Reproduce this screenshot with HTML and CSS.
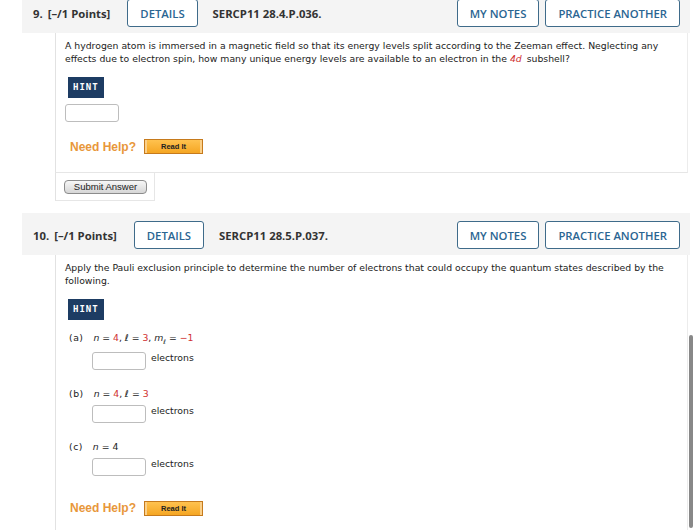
FILE: index.html
```html
<!DOCTYPE html>
<html lang="en">
<head>
    <meta charset="UTF-8">
    <meta name="viewport" content="width=device-width, initial-scale=1.0">
    <title>Assignment</title>
    <link rel="stylesheet" href="styles.css">
</head>
<body>
    <!-- Question 9 -->
    <div class="question first">
        <div class="q-header">
            <span class="q-num">9.</span>
            <span class="q-points">[–/1 Points]</span>
            <button class="btn">DETAILS</button>
            <span class="q-code">SERCP11 28.4.P.036.</span>
            <div class="q-actions">
                <button class="btn">MY NOTES</button>
                <button class="btn">PRACTICE ANOTHER</button>
            </div>
        </div>
        <div class="q-body">
            <p class="q-text">A hydrogen atom is immersed in a magnetic field so that its energy levels split according to the Zeeman effect. Neglecting any effects due to electron spin, how many unique energy levels are available to an electron in the <i class="red sub-name">4d</i> subshell?</p>
            <div class="hint">HINT</div>
            <input type="text" class="answer single">
            <div class="help">
                <span class="help-label">Need Help?</span>
                <button class="read-it">Read It</button>
            </div>
        </div>
        <div class="submit-row">
            <button class="submit">Submit Answer</button>
        </div>
    </div>

    <!-- Question 10 -->
    <div class="question">
        <div class="q-header">
            <span class="q-num">10.</span>
            <span class="q-points">[–/1 Points]</span>
            <button class="btn">DETAILS</button>
            <span class="q-code">SERCP11 28.5.P.037.</span>
            <div class="q-actions">
                <button class="btn">MY NOTES</button>
                <button class="btn">PRACTICE ANOTHER</button>
            </div>
        </div>
        <div class="q-body">
            <p class="q-text">Apply the Pauli exclusion principle to determine the number of electrons that could occupy the quantum states described by the following.</p>
            <div class="hint">HINT</div>

            <div class="part">
                <div class="part-label"><span class="letter">(a)</span> <i>n</i> = <span class="red">4</span>, <i>ℓ</i> = <span class="red">3</span>, <i>m</i><sub><i>ℓ</i></sub> = <span class="red">−1</span></div>
                <div class="part-input"><input type="text" class="answer"> electrons</div>
            </div>
            <div class="part">
                <div class="part-label"><span class="letter">(b)</span> <i>n</i> = <span class="red">4</span>, <i>ℓ</i> = <span class="red">3</span></div>
                <div class="part-input"><input type="text" class="answer"> electrons</div>
            </div>
            <div class="part">
                <div class="part-label"><span class="letter">(c)</span> <i>n</i> = 4</div>
                <div class="part-input"><input type="text" class="answer"> electrons</div>
            </div>

            <div class="help">
                <span class="help-label">Need Help?</span>
                <button class="read-it">Read It</button>
            </div>
        </div>
    </div>

    <div class="scrollbar"></div>
</body>
</html>
```

FILE: styles.css
```css
/* page */
body {
    margin: 0;
    background-color: #ffffff;
    font-family: "DejaVu Sans", Verdana, sans-serif;
    color: #222222;
    overflow: hidden;
}

/* one question block */
.question {
    margin: 12px 10px 0 22px;
}

.question.first {
    margin-top: -9px;
}

/* grey header with buttons */
.q-header {
    display: flex;
    align-items: center;
    background-color: #f4f4f4;
    padding: 8px 10px 6px 11px;
    font-family: "Open Sans", sans-serif;
    font-weight: 700;
    font-size: 11.3px;
    color: #333333;
}

.q-num {
    margin-right: 5px;
}

.q-points {
    margin-right: 17px;
}

.q-code {
    margin-left: 15px;
}

.q-actions {
    margin-left: auto;
    display: flex;
    gap: 6px;
}

.btn {
    height: 28px;
    padding: 0 12px;
    background-color: #ffffff;
    border: 1px solid #3f6b8a;
    border-radius: 3px;
    font-family: "Open Sans", sans-serif;
    font-weight: 600;
    font-size: 11.3px;
    color: #2a6592;
}

/* question body */
.q-body {
    margin-left: 33px;
    margin-right: 2px;
    border-left: 1px solid #e2e2e2;
    border-right: 1px solid #ececec;
    border-bottom: 1px solid #e6e6e6;
    padding: 6px 10px 18px 9px;
}

.q-text {
    margin: 0 0 12px 0;
    font-size: 9.3px;
    line-height: 13px;
}

.red {
    color: #d03030;
}

.sub-name {
    margin-right: 2px;
}

.hint {
    width: fit-content;
    height: 21px;
    line-height: 21px;
    box-sizing: border-box;
    margin-left: 3px;
    padding: 0 5px;
    background-color: #1d3c63;
    color: #ffffff;
    font-family: "DejaVu Sans Mono", monospace;
    font-weight: 700;
    font-size: 9px;
    letter-spacing: 1px;
}

.answer {
    width: 54px;
    height: 18px;
    box-sizing: border-box;
    border: 1px solid #bdbdbd;
    border-radius: 3px;
    margin: 0;
    vertical-align: middle;
}

.answer.single {
    display: block;
    margin-top: 6px;
}

/* Need Help? row */
.help {
    display: flex;
    align-items: center;
    margin-top: 17px;
    padding-left: 5px;
}

.part + .help {
    margin-top: 25px;
}

.help-label {
    font-family: "Liberation Sans", Arial, sans-serif;
    font-weight: 700;
    font-size: 12px;
    color: #e8973b;
    margin-right: 8px;
}

.read-it {
    width: 59px;
    height: 15px;
    padding: 0;
    border: 1px solid #c67a1c;
    box-shadow: inset 2px 0 0 #fbd089, inset -2px 0 0 #fbd089;
    background: linear-gradient(#ffc24f, #f5a623);
    font-family: "Liberation Sans", Arial, sans-serif;
    font-weight: 700;
    font-size: 7.5px;
    color: #222222;
}

/* submit cell under first question */
.submit-row {
    margin-left: 33px;
    width: 100px;
    height: 28px;
    border-left: 1px solid #e2e2e2;
    border-right: 1px solid #e6e6e6;
    border-bottom: 1px solid #e6e6e6;
    display: flex;
    align-items: center;
    padding-left: 8px;
    box-sizing: border-box;
}

.submit {
    width: 83px;
    height: 14px;
    padding: 0;
    border: 1px solid #8c8c8c;
    border-radius: 4px;
    background: linear-gradient(#f7f7f7, #d6d6d6);
    font-family: "Liberation Sans", Arial, sans-serif;
    font-size: 9.5px;
    color: #222222;
}

/* parts (a) (b) (c) */
.part {
    margin-top: 12px;
    font-size: 9.3px;
}

.part + .part {
    margin-top: 18px;
}

.part-label {
    padding-left: 4px;
}

.letter {
    letter-spacing: 0.5px;
    margin-right: 7px;
}

.part-label sub {
    font-size: 6.5px;
}

.part-input {
    padding-left: 27px;
}

.part-input .answer {
    margin: 6px 2px 0 0;
}

/* fake scrollbar on the right */
.scrollbar {
    position: absolute;
    left: 689px;
    top: 335px;
    width: 4px;
    height: 193px;
    border-radius: 2px;
    background-color: #888888;
}
```
